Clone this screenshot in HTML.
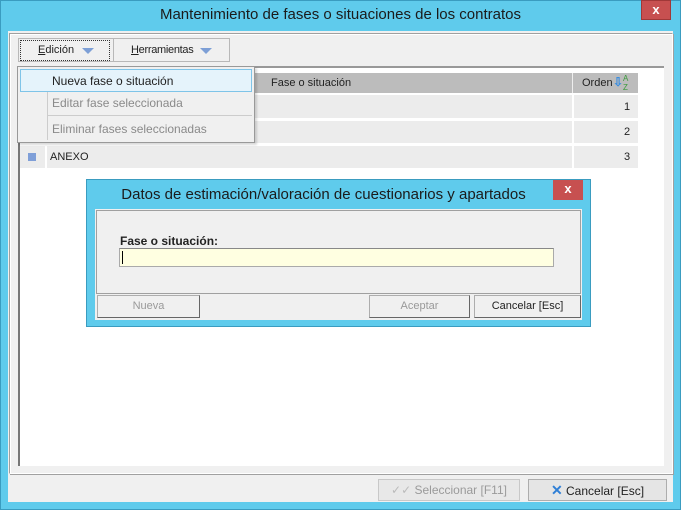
<!DOCTYPE html><html><head><style>
*{box-sizing:border-box;margin:0;padding:0}
body{width:681px;height:510px;background:#5fcbec;font-family:"Liberation Sans",sans-serif;font-size:11px;position:relative;overflow:hidden}
.a{position:absolute}
.t{color:#222}
</style></head><body>
<div class="a" style="left:0;top:0;width:681px;height:510px;border:1px solid #3a9cc0"></div>
<div class="a" style="left:0;top:6px;width:681px;text-align:center;font-size:15px;color:#1b1b1b">Mantenimiento de fases o situaciones de los contratos</div>
<div class="a" style="left:641px;top:0;width:30px;height:20px;background:#c75050;border:1px solid #a03838;color:#fff;font-weight:bold;text-align:center;line-height:18px;font-size:13px">x</div>
<div class="a" style="left:8px;top:31px;width:665px;height:471px;background:#f0f0f0"></div>
<div class="a" style="left:9px;top:33px;width:664px;height:441px;border:1px solid #a0a0a0;border-right-color:#fff;border-bottom-color:#fff;box-shadow:inset 1px 1px 0 #fff,1px 1px 0 #a0a0a0"></div>
<div class="a" style="left:18px;top:38px;width:212px;height:24px;border:1px solid #b8b8b8;background:#f0f0f0"></div>
<div class="a" style="left:20px;top:40px;width:90px;height:21px;border:1px dotted #333"></div>
<div class="a" style="left:113px;top:38px;width:1px;height:24px;background:#b8b8b8"></div>
<div class="a t" style="left:38px;top:44px"><u>E</u>dición</div>
<div class="a" style="left:82px;top:48px;width:0;height:0;border-left:6px solid transparent;border-right:6px solid transparent;border-top:6px solid #7d9fd6"></div>
<div class="a t" style="left:131px;top:44px;letter-spacing:-0.3px"><u>H</u>erramientas</div>
<div class="a" style="left:200px;top:48px;width:0;height:0;border-left:6px solid transparent;border-right:6px solid transparent;border-top:6px solid #7d9fd6"></div>
<div class="a" style="left:18px;top:66px;width:646px;height:400px;background:#fff;border-left:2px solid #777;border-top:2px solid #999"></div>
<div class="a" style="left:20px;top:73px;width:618px;height:20px;background:#bcbcbc"></div>
<div class="a t" style="left:271px;top:77px">Fase o situación</div>
<div class="a" style="left:572px;top:73px;width:1px;height:20px;background:#eee"></div>
<div class="a t" style="left:582px;top:77px">Orden</div>
<div class="a" style="left:613px;top:75px;color:#3a8ee0;font-size:12px;font-weight:bold">⇩</div>
<div class="a" style="left:623px;top:74px;color:#3a9a3a;font-size:8px;line-height:9px">A<br>Z</div>
<div class="a" style="left:20px;top:95px;width:618px;height:23px;background:#ececec"></div>
<div class="a" style="left:20px;top:121px;width:618px;height:22px;background:#ececec"></div>
<div class="a" style="left:20px;top:146px;width:618px;height:22px;background:#ececec"></div>
<div class="a" style="left:45px;top:95px;width:2px;height:73px;background:#fff"></div>
<div class="a" style="left:572px;top:95px;width:2px;height:73px;background:#fff"></div>
<div class="a t" style="left:624px;top:101px">1</div>
<div class="a t" style="left:624px;top:126px">2</div>
<div class="a t" style="left:624px;top:151px">3</div>
<div class="a" style="left:28px;top:153px;width:8px;height:8px;background:#7f9fd8"></div>
<div class="a t" style="left:50px;top:151px;font-size:11px">ANEXO</div>
<div class="a" style="left:17px;top:66px;width:238px;height:77px;background:#f0f0f0;border:1px solid #999;box-shadow:2px 2px 2px rgba(0,0,0,.15)"></div>
<div class="a" style="left:47px;top:92px;width:1px;height:48px;background:#ccc"></div>
<div class="a" style="left:20px;top:69px;width:232px;height:23px;background:#e5f3fb;border:1px solid #7fc4e8"></div>
<div class="a t" style="left:52px;top:74px;font-size:12px">Nueva fase o situación</div>
<div class="a" style="left:52px;top:96px;color:#8a8a8a;font-size:12px">Editar fase seleccionada</div>
<div class="a" style="left:48px;top:115px;width:204px;height:1px;background:#ccc"></div>
<div class="a" style="left:52px;top:122px;color:#8a8a8a;font-size:12px">Eliminar fases seleccionadas</div>
<div class="a" style="left:86px;top:179px;width:505px;height:148px;background:#5fcbec;border:1px solid #3a9cc0"></div>
<div class="a" style="left:86px;top:186px;width:475px;text-align:center;font-size:15px;color:#1b1b1b">Datos de estimación/valoración de cuestionarios y apartados</div>
<div class="a" style="left:553px;top:180px;width:30px;height:20px;background:#c75050;color:#fff;font-weight:bold;text-align:center;line-height:18px;font-size:13px">x</div>
<div class="a" style="left:95px;top:209px;width:487px;height:111px;background:#f0f0f0"></div>
<div class="a" style="left:96px;top:210px;width:485px;height:84px;border:1px solid #a0a0a0"></div>
<div class="a t" style="left:120px;top:234px;font-weight:bold;font-size:12px">Fase o situación:</div>
<div class="a" style="left:119px;top:248px;width:435px;height:19px;background:#ffffe1;border:1px solid #aaa;border-top-color:#888"></div>
<div class="a" style="left:122px;top:251px;width:1px;height:13px;background:#000"></div>
<div class="a" style="left:97px;top:295px;width:103px;height:23px;border:1px solid #adadad;border-right-color:#666;border-bottom-color:#666;background:#f0f0f0;color:#999;text-align:center;line-height:21px">Nueva</div>
<div class="a" style="left:369px;top:295px;width:101px;height:23px;border:1px solid #adadad;border-right-color:#666;border-bottom-color:#666;background:#f0f0f0;color:#999;text-align:center;line-height:21px">Aceptar</div>
<div class="a t" style="left:474px;top:295px;width:107px;height:23px;border:1px solid #adadad;border-right-color:#666;border-bottom-color:#666;background:#f0f0f0;text-align:center;line-height:21px">Cancelar [Esc]</div>
<div class="a" style="left:378px;top:479px;width:142px;height:22px;border:1px solid #c8c8c8;background:#e8e8e8;color:#9a9a9a;text-align:center;line-height:20px;font-size:12px"><span style="color:#bbb">✓✓</span> Seleccionar [F11]</div>
<div class="a t" style="left:528px;top:479px;width:139px;height:22px;border:1px solid #adadad;background:#e5e5e5;text-align:center;line-height:20px;font-size:12px"><span style="color:#2f7fd6;font-weight:bold;font-size:14px">✕</span> Cancelar [Esc]</div>
</body></html>
